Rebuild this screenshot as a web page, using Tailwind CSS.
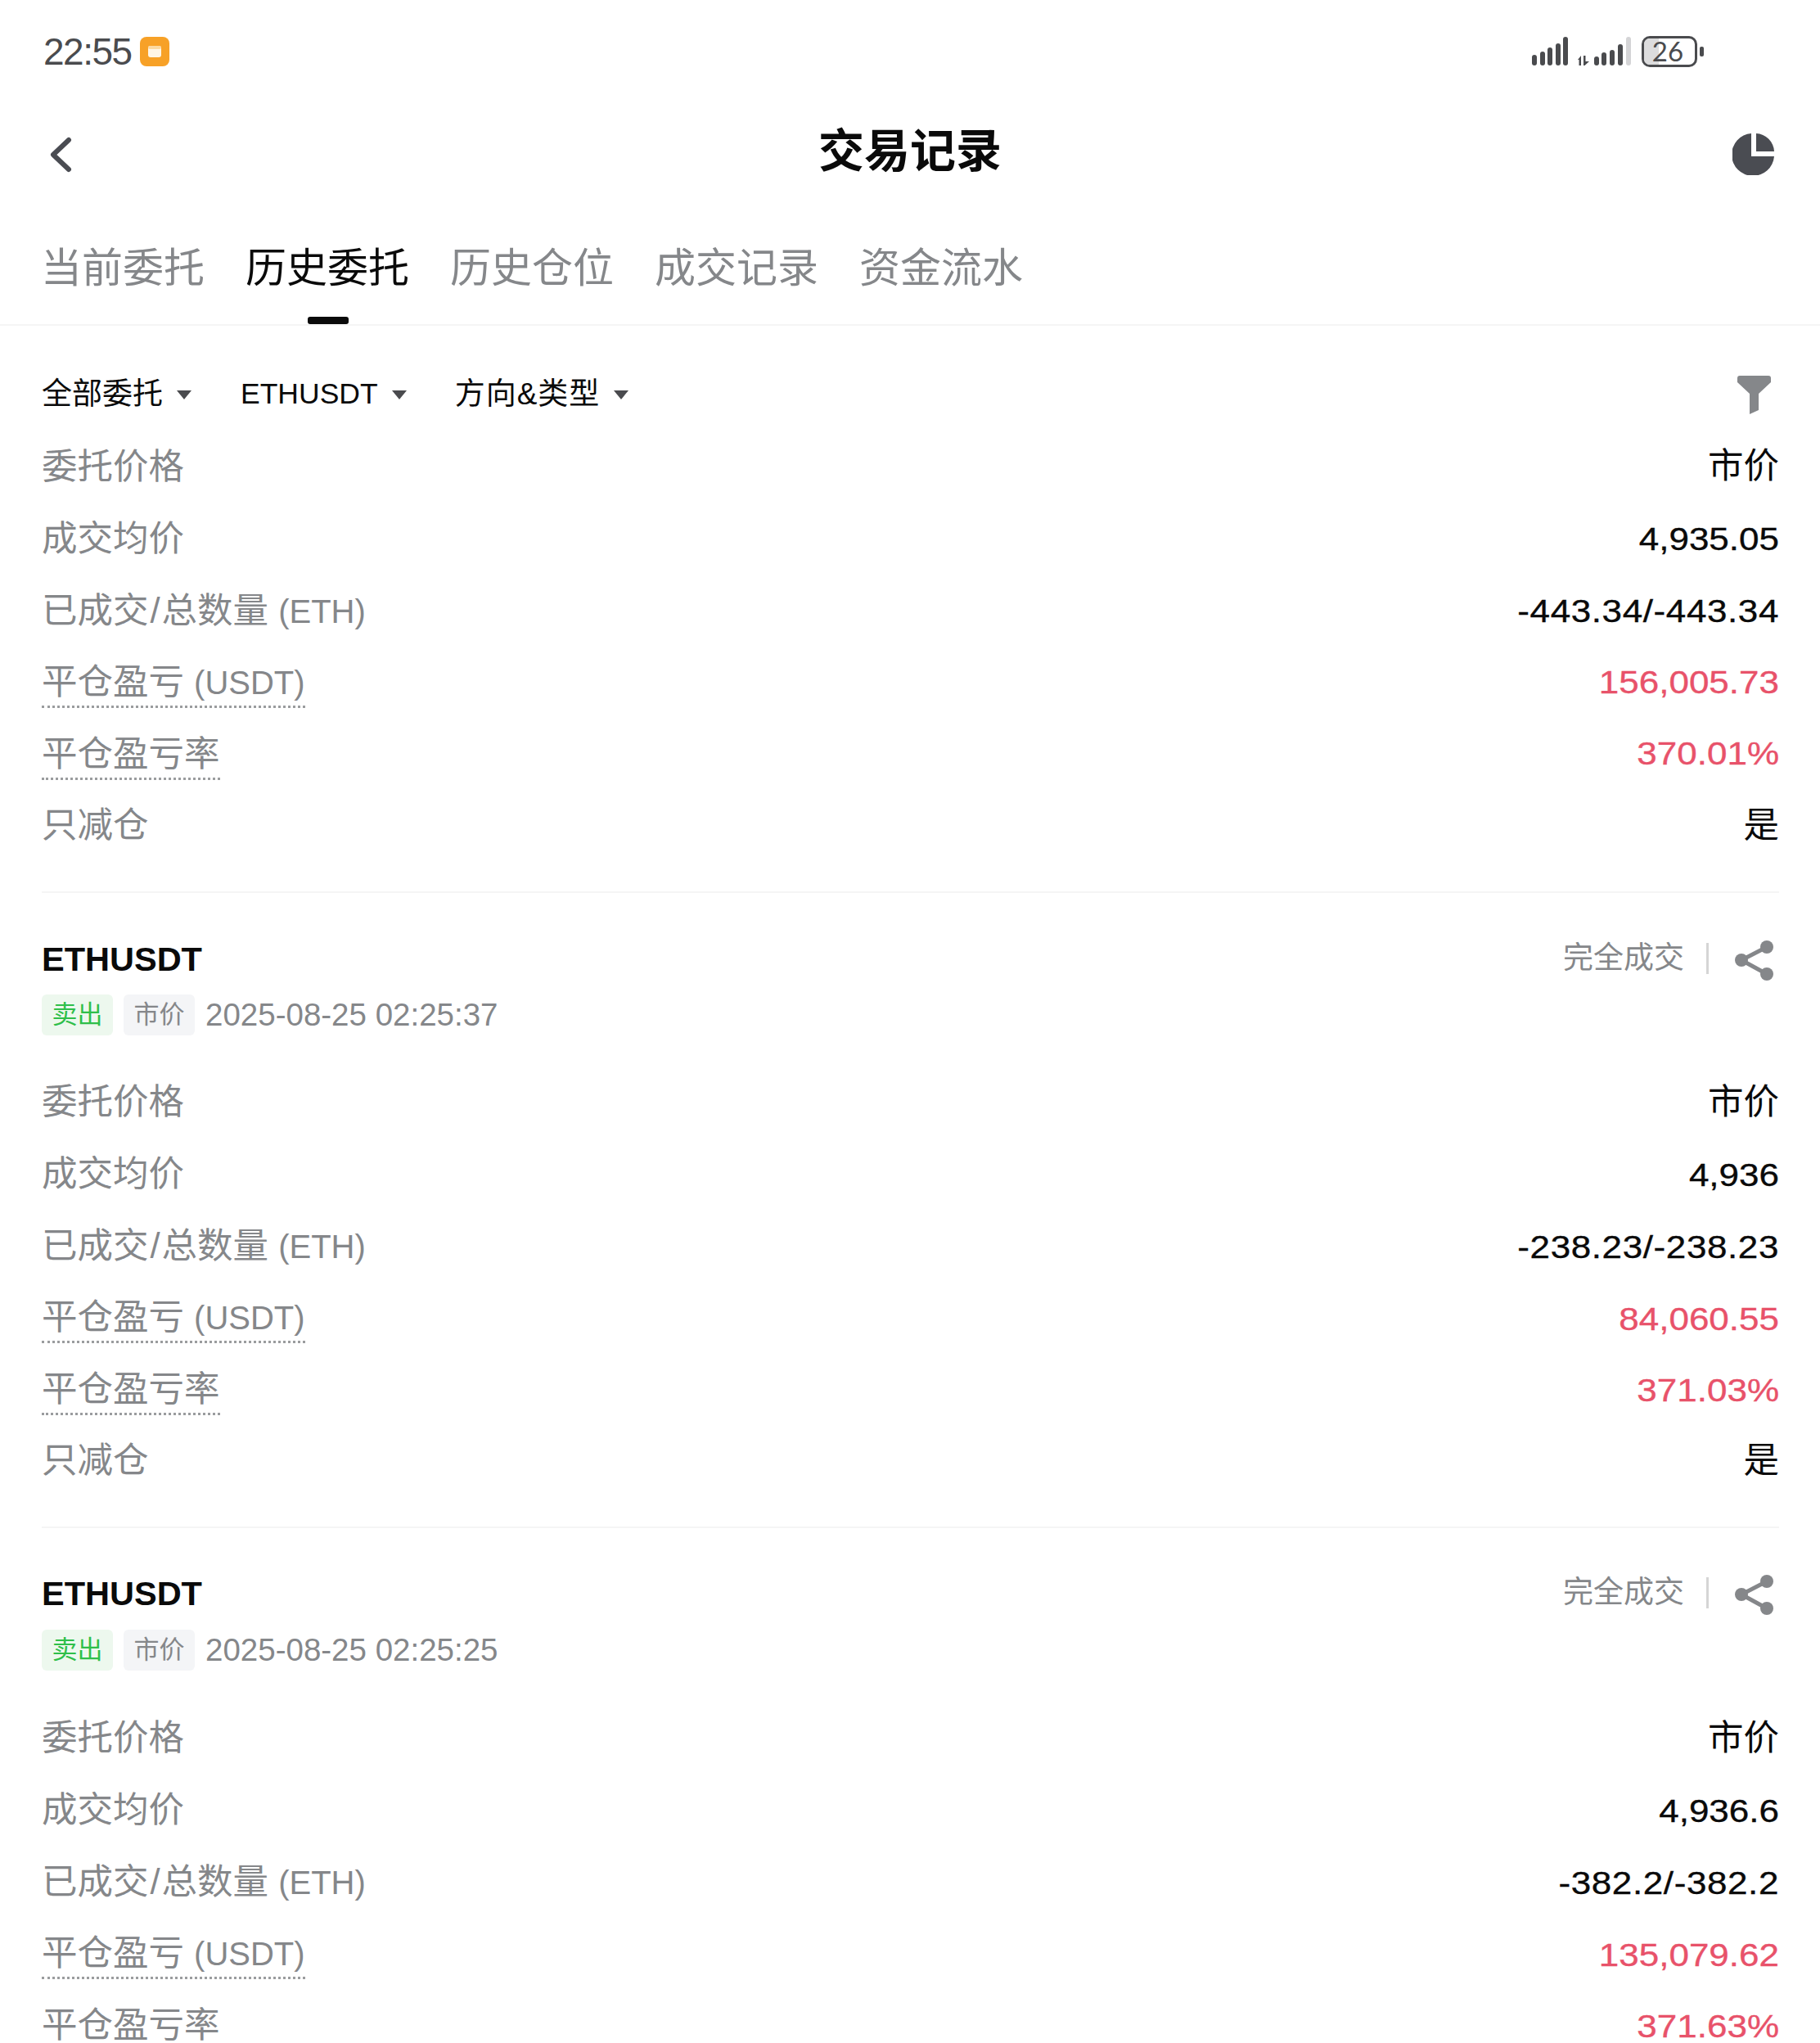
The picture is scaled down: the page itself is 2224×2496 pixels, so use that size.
<!DOCTYPE html>
<html lang="zh-CN">
<head>
<meta charset="utf-8">
<script src="https://cdn.jsdelivr.net/npm/@tailwindcss/browser@4"></script>
</head>
<body class="bg-white">
<div class="w-[2224px] h-[2496px] overflow-hidden bg-white font-['Liberation_Sans','Noto_Sans_CJK_SC',sans-serif]">
  <div class="h-[125px] pl-[53px] pr-[142px] flex items-center justify-between">
    <div class="flex items-center gap-[10px]">
      <span class="text-[46px] leading-none text-[#4a4b4e] tracking-[-1.5px]">22:55</span>
      <svg class="w-[36px] h-[36px]" viewBox="0 0 36 36"><rect width="36" height="36" rx="8" fill="#f7a127"/><rect x="10" y="11" width="16" height="14" rx="3" fill="#fff6e6"/><rect x="10" y="11" width="16" height="4" rx="2" fill="#fcd9a0"/></svg>
    </div>
    <div class="flex items-center">
      <svg class="w-[122px] h-[35px]" viewBox="0 0 122 35">
        <g fill="#4a4b4e">
          <rect x="0" y="22" width="6" height="13" rx="3"/><rect x="10" y="18" width="6" height="17" rx="3"/><rect x="19" y="13" width="6" height="22" rx="3"/><rect x="29" y="8" width="6" height="27" rx="3"/><rect x="38" y="0" width="6" height="35" rx="3"/>
          <path d="M56 28 L60 23 L60 35 L57.5 35 V28 Z M63 23 H65.5 V30 L70 30 L64.5 35 L63 35 Z"/>
          <rect x="76" y="24" width="6" height="11" rx="3"/><rect x="85" y="19" width="6" height="16" rx="3"/><rect x="95" y="16" width="6" height="19" rx="3"/><rect x="105" y="9" width="6" height="26" rx="3"/>
        </g>
        <rect x="115" y="0" width="6" height="35" rx="3" fill="#d4d4d6"/>
      </svg>
      <div class="ml-[12px] relative w-[68px] h-[38px] rounded-[10px] border-[3px] border-[#4a4b4e] overflow-hidden flex items-center justify-center leading-none text-[#4a4b4e]">
        <span class="absolute left-0 top-0 bottom-0 w-[18px] bg-[#dcdcdd]"></span><span class="relative text-[33px] font-['Lato',sans-serif] pr-[4px]">26</span>
      </div>
      <span class="ml-[3px] w-[5px] h-[12px] rounded-[2px] bg-[#4a4b4e]"></span>
    </div>
  </div>
  <div class="h-[122px] pl-[60px] pr-[55px] flex items-center justify-between relative">
    <svg class="w-[30px] h-[44px] mt-[6px]" viewBox="0 0 30 44"><path d="M24 4 L5 22 L24 40" fill="none" stroke="#4a4c52" stroke-width="6" stroke-linecap="round" stroke-linejoin="round"/></svg>
    <span class="absolute left-0 right-0 text-center text-[56px] leading-none font-bold text-[#0a0a0a] -mt-[2px]">交易记录</span>
    <svg class="w-[52px] h-[52px] mt-[4px]" viewBox="0 0 52 52"><path d="M23 1 V29 H51 A26 26 0 1 1 23 1 Z" fill="#4a4c52"/><path d="M29 1 A23 23 0 0 1 51 23 H29 Z" fill="#4a4c52"/></svg>
  </div>
  <div class="h-[151px] pl-[50px] pt-[51px] flex gap-[50px] border-b-2 border-[#f5f5f5] text-[50px] leading-[60px] text-[#85878a]">
    <span>当前委托</span>
    <span class="relative h-[98px] text-[#0a0a0a]">历史委托<span class="absolute left-[76px] bottom-0 w-[50px] h-[9px] rounded-[3px] bg-[#0a0a0a]"></span></span>
    <span>历史仓位</span><span>成交记录</span><span>资金流水</span>
  </div>
  <div class="h-[130px] pt-[38px] pl-[51px] pr-[60px] flex items-center text-[37px] text-[#0a0a0a]">
    <span>全部委托</span><span class="ml-[17px] w-0 h-0 border-x-[9px] border-x-transparent border-t-[11px] border-t-[#4a4b4e]"></span>
    <span class="ml-[60px] text-[35.5px]">ETHUSDT</span><span class="ml-[17px] w-0 h-0 border-x-[9px] border-x-transparent border-t-[11px] border-t-[#4a4b4e]"></span>
    <span class="ml-[59px] tracking-[1px]">方向&amp;类型</span><span class="ml-[17px] w-0 h-0 border-x-[9px] border-x-transparent border-t-[11px] border-t-[#4a4b4e]"></span>
    <svg class="ml-auto w-[41px] h-[47px]" viewBox="0 0 41 47"><path d="M3 0 H38 Q41 0 41 3 V8 L26 22 V42 L15 47 V22 L0 8 V3 Q0 0 3 0 Z" fill="#85878a"/></svg>
  </div>
  <div class="ml-[51px] mr-[50px] h-[564px] border-b-2 border-[#f5f5f5] -mt-[1px]">
    <div class="h-[88px] flex items-center justify-between text-[#85878a]"><span class="text-[43.5px]">委托价格</span><span class="text-[43.5px] -mt-[2px] text-[#0a0a0a]">市价</span></div>
    <div class="h-[87px] flex items-center justify-between text-[#85878a]"><span class="text-[43.5px]">成交均价</span><span class="text-[44px] scale-y-90 [-webkit-text-stroke:0.4px] text-[#0a0a0a]">4,935.05</span></div>
    <div class="h-[89px] flex items-center justify-between text-[#85878a]"><span class="text-[43.5px]">已成交<span class="mx-[2px]">/</span>总数量 <span class="text-[40px]">(ETH)</span></span><span class="text-[44px] scale-y-90 tracking-[0.6px] [-webkit-text-stroke:0.4px] text-[#0a0a0a]">-443.34/-443.34</span></div>
    <div class="h-[88px] flex items-center justify-between text-[#85878a]"><span class="text-[43.5px] leading-[56px] border-b-[3px] border-dotted border-[#9a9c9e]">平仓盈亏 <span class="text-[40px]">(USDT)</span></span><span class="text-[44px] -mt-[2px] scale-y-90 [-webkit-text-stroke:0.4px] text-[#e8526a]">156,005.73</span></div>
    <div class="h-[86px] flex items-center justify-between text-[#85878a]"><span class="text-[43.5px] leading-[58px] border-b-[3px] border-dotted border-[#9a9c9e]">平仓盈亏率</span><span class="text-[44px] -mt-[2px] scale-y-90 [-webkit-text-stroke:0.4px] text-[#e8526a]">370.01%</span></div>
    <div class="h-[87px] flex items-center justify-between text-[#85878a]"><span class="text-[43.5px]">只减仓</span><span class="text-[43.5px] text-[#0a0a0a]">是</span></div>
  </div>

  <div class="ml-[51px] mr-[50px] h-[776px] border-b-2 border-[#f5f5f5] pt-[57px]">
    <div class="h-[48px] flex items-center justify-between">
      <span class="text-[41.5px] font-bold text-[#0a0a0a]">ETHUSDT</span>
      <div class="flex items-center text-[37px] text-[#85878a] -mt-[2px]">
        <span>完全成交</span><span class="ml-[27px] w-[3px] h-[38px] bg-[#d5d5d5]"></span>
        <svg class="ml-[32px] mr-[7px] mt-[4px] w-[47px] h-[49px]" viewBox="0 0 47 49"><path d="M39 8 L8 24 L39 41" fill="none" stroke="#85878a" stroke-width="5"/><circle cx="39" cy="8" r="8" fill="#85878a"/><circle cx="8" cy="24" r="8" fill="#85878a"/><circle cx="39" cy="41" r="8" fill="#85878a"/></svg>
      </div>
    </div>
    <div class="mt-[19px] h-[50px] flex items-center">
      <span class="w-[87px] h-[50px] rounded-[6px] bg-[#edf8ee] text-[#2fbf4a] text-[31px] flex items-center justify-center">卖出</span>
      <span class="ml-[13px] w-[87px] h-[50px] rounded-[6px] bg-[#f4f5f7] text-[#85878a] text-[31px] flex items-center justify-center">市价</span>
      <span class="ml-[13px] text-[38.5px] text-[#85878a]">2025-08-25 02:25:37</span>
    </div>
    <div class="mt-[38px]">
      <div class="h-[88px] flex items-center justify-between text-[#85878a]"><span class="text-[43.5px]">委托价格</span><span class="text-[43.5px] text-[#0a0a0a]">市价</span></div>
      <div class="h-[87px] flex items-center justify-between text-[#85878a]"><span class="text-[43.5px]">成交均价</span><span class="text-[44px] scale-y-90 [-webkit-text-stroke:0.4px] text-[#0a0a0a]">4,936</span></div>
      <div class="h-[89px] flex items-center justify-between text-[#85878a]"><span class="text-[43.5px]">已成交<span class="mx-[2px]">/</span>总数量 <span class="text-[40px]">(ETH)</span></span><span class="text-[44px] scale-y-90 tracking-[0.6px] [-webkit-text-stroke:0.4px] text-[#0a0a0a]">-238.23/-238.23</span></div>
      <div class="h-[88px] flex items-center justify-between text-[#85878a]"><span class="text-[43.5px] leading-[56px] border-b-[3px] border-dotted border-[#9a9c9e]">平仓盈亏 <span class="text-[40px]">(USDT)</span></span><span class="text-[44px] scale-y-90 [-webkit-text-stroke:0.4px] text-[#e8526a]">84,060.55</span></div>
      <div class="h-[86px] flex items-center justify-between text-[#85878a]"><span class="text-[43.5px] leading-[58px] border-b-[3px] border-dotted border-[#9a9c9e]">平仓盈亏率</span><span class="text-[44px] scale-y-90 [-webkit-text-stroke:0.4px] text-[#e8526a]">371.03%</span></div>
      <div class="h-[87px] flex items-center justify-between text-[#85878a]"><span class="text-[43.5px]">只减仓</span><span class="text-[43.5px] text-[#0a0a0a]">是</span></div>
    </div>
  </div>

  <div class="ml-[51px] mr-[50px] pt-[56px]">
    <div class="h-[48px] flex items-center justify-between">
      <span class="text-[41.5px] font-bold text-[#0a0a0a]">ETHUSDT</span>
      <div class="flex items-center text-[37px] text-[#85878a] -mt-[2px]">
        <span>完全成交</span><span class="ml-[27px] w-[3px] h-[38px] bg-[#d5d5d5]"></span>
        <svg class="ml-[32px] mr-[7px] mt-[4px] w-[47px] h-[49px]" viewBox="0 0 47 49"><path d="M39 8 L8 24 L39 41" fill="none" stroke="#85878a" stroke-width="5"/><circle cx="39" cy="8" r="8" fill="#85878a"/><circle cx="8" cy="24" r="8" fill="#85878a"/><circle cx="39" cy="41" r="8" fill="#85878a"/></svg>
      </div>
    </div>
    <div class="mt-[20px] h-[50px] flex items-center">
      <span class="w-[87px] h-[50px] rounded-[6px] bg-[#edf8ee] text-[#2fbf4a] text-[31px] flex items-center justify-center">卖出</span>
      <span class="ml-[13px] w-[87px] h-[50px] rounded-[6px] bg-[#f4f5f7] text-[#85878a] text-[31px] flex items-center justify-center">市价</span>
      <span class="ml-[13px] text-[38.5px] text-[#85878a]">2025-08-25 02:25:25</span>
    </div>
    <div class="mt-[39px]">
      <div class="h-[88px] flex items-center justify-between text-[#85878a]"><span class="text-[43.5px]">委托价格</span><span class="text-[43.5px] text-[#0a0a0a]">市价</span></div>
      <div class="h-[87px] flex items-center justify-between text-[#85878a]"><span class="text-[43.5px]">成交均价</span><span class="text-[44px] scale-y-90 [-webkit-text-stroke:0.4px] text-[#0a0a0a]">4,936.6</span></div>
      <div class="h-[89px] flex items-center justify-between text-[#85878a]"><span class="text-[43.5px]">已成交<span class="mx-[2px]">/</span>总数量 <span class="text-[40px]">(ETH)</span></span><span class="text-[44px] scale-y-90 tracking-[0.6px] [-webkit-text-stroke:0.4px] text-[#0a0a0a]">-382.2/-382.2</span></div>
      <div class="h-[88px] flex items-center justify-between text-[#85878a]"><span class="text-[43.5px] leading-[56px] border-b-[3px] border-dotted border-[#9a9c9e]">平仓盈亏 <span class="text-[40px]">(USDT)</span></span><span class="text-[44px] scale-y-90 [-webkit-text-stroke:0.4px] text-[#e8526a]">135,079.62</span></div>
      <div class="h-[86px] flex items-center justify-between text-[#85878a]"><span class="text-[43.5px] leading-[58px] border-b-[3px] border-dotted border-[#9a9c9e]">平仓盈亏率</span><span class="text-[44px] scale-y-90 [-webkit-text-stroke:0.4px] text-[#e8526a]">371.63%</span></div>
    </div>
  </div>
</div>
</body>
</html>
